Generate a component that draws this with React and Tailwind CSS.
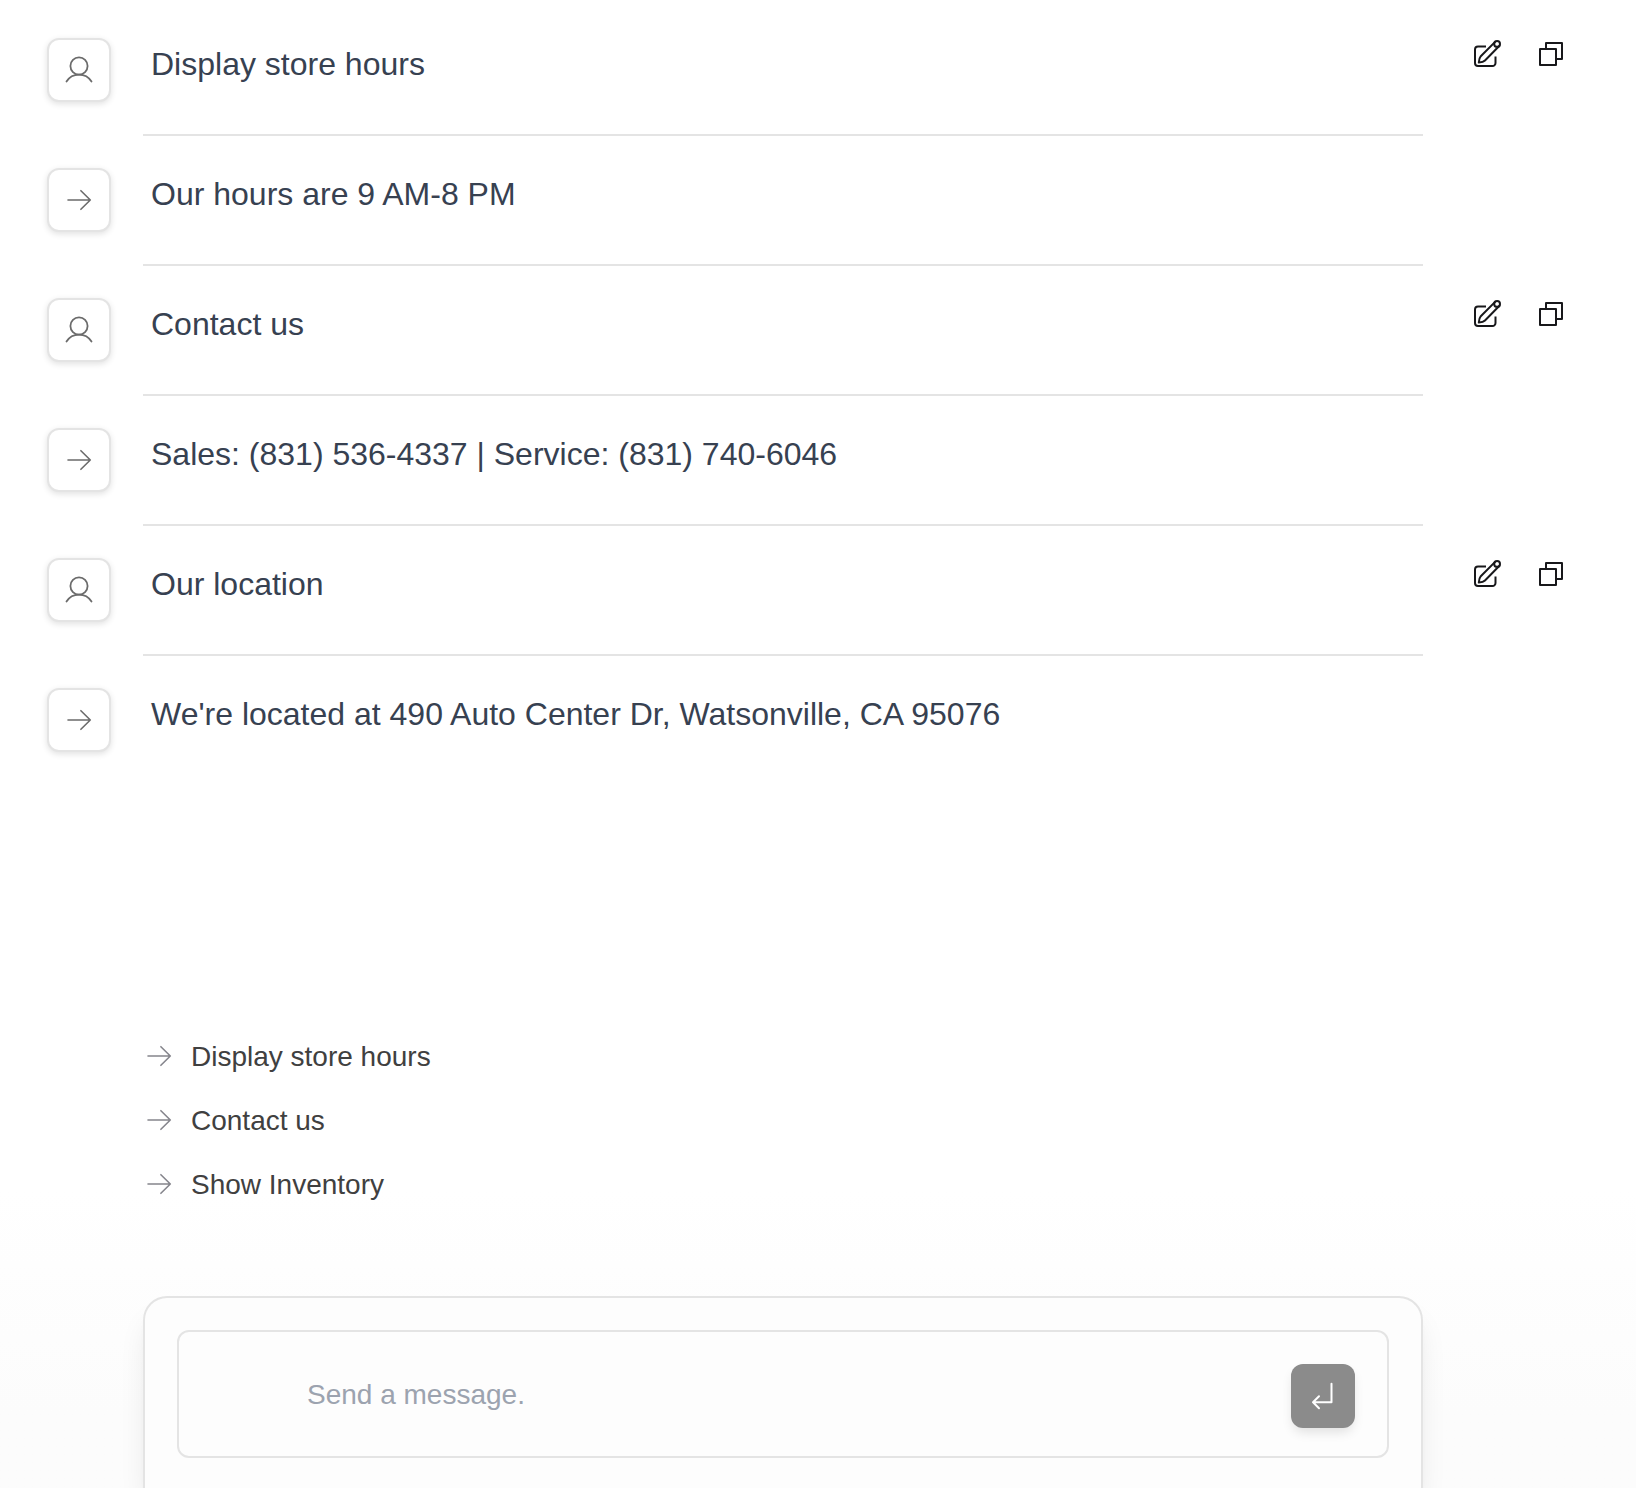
const messages = [
  { from: "user", text: "Display store hours" },
  { from: "bot", text: "Our hours are 9 AM-8 PM" },
  { from: "user", text: "Contact us" },
  { from: "bot", text: "Sales: (831) 536-4337 | Service: (831) 740-6046" },
  { from: "user", text: "Our location" },
  { from: "bot", text: "We're located at 490 Auto Center Dr, Watsonville, CA 95076" },
];

const suggestions = ["Display store hours", "Contact us", "Show Inventory"];

function Icon({ children }) {
  return (
    <svg
      viewBox="0 0 32 32"
      className="size-8 shrink-0"
      fill="none"
      stroke="currentColor"
      strokeWidth="2"
      strokeLinecap="round"
      strokeLinejoin="round"
      aria-hidden="true"
    >
      {children}
    </svg>
  );
}

const UserIcon = () => (
  <Icon>
    <g strokeWidth="1.8">
      <circle cx="16" cy="12" r="8.6" />
      <path d="M3.500 27.500C6.200 23.200 10.800 20.600 16 20.600s9.800 2.600 12.500 6.900" />
    </g>
  </Icon>
);

const ArrowIcon = () => (
  <Icon>
    <path d="M5 16h22.300M17.900 6.700L27.300 16l-9.400 9.300" strokeWidth="1.6" />
  </Icon>
);

const EditIcon = () => (
  <Icon>
    <path d="M15 8.500H7a3 3 0 0 0-3 3V25a3 3 0 0 0 3 3h14.500a3 3 0 0 0 3-3v-6.500" strokeLinecap="butt" />
    <path d="M24.100 3.900L9.800 18.200Q8.200 20 7.800 24.500Q12.300 24.200 14 22.500L28.200 8" />
    <circle cx="26.100" cy="5.900" r="2.900" />
  </Icon>
);

const CopyIcon = () => (
  <Icon>
    <path d="M5 11h16v16H5z" />
    <path d="M11 11V5h16v16h-6" />
  </Icon>
);

function Message({ from, text, last }) {
  return (
    <li className="flex items-start">
      <div className="mr-8 flex size-16 shrink-0 items-center justify-center rounded-xl border-2 border-[#e4e4e4] bg-white text-[#6b6b6b] shadow-[0_2px_6px_rgba(0,0,0,0.12)]">
        {from === "user" ? <UserIcon /> : <ArrowIcon />}
      </div>
      <div className={last ? "min-w-0 flex-1" : "min-w-0 flex-1 border-b-2 border-[#e4e4e4] pb-10"}>
        <p className="px-2 pb-1 text-[32px] leading-13 text-[#374151]">{text}</p>
      </div>
      <div className="ml-12 flex w-24 shrink-0 justify-between text-[#18181b]">
        {from === "user" && (
          <>
            <button type="button" aria-label="Edit message"><EditIcon /></button>
            <button type="button" aria-label="Copy message"><CopyIcon /></button>
          </>
        )}
      </div>
    </li>
  );
}

export default function App() {
  return (
    <div className="flex min-h-screen flex-col overflow-hidden bg-linear-to-b from-white from-80% to-[#fcfcfc] to-95% font-['Liberation_Sans',Arial,sans-serif]">
      <ul className="flex flex-col gap-8 pt-[38px] pr-[69px] pl-[47px]">
        {messages.map((m, i) => (
          <Message key={i} {...m} last={i === messages.length - 1} />
        ))}
      </ul>
      <div className="mt-auto mr-[213px] ml-[143px]">
        <ul className="mb-20">
          {suggestions.map((s) => (
            <li key={s}>
              <button type="button" className="flex h-16 items-center gap-4 text-[28px] text-[#404040]">
                <span className="text-[#85858c]"><ArrowIcon /></span>
                <span className="pt-0.5">{s}</span>
              </button>
            </li>
          ))}
        </ul>
        <div className="rounded-t-3xl border-2 border-b-0 border-[#e4e4e4] bg-[#fdfdfd] px-8 pt-8 pb-[30px] shadow-[0_20px_30px_-6px_rgba(0,0,0,0.1),0_8px_12px_-8px_rgba(0,0,0,0.1)]">
          <form className="flex items-start rounded-xl border-2 border-[#e4e4e4] pt-8 pr-8 pb-7 pl-32" onSubmit={(e) => e.preventDefault()}>
            <input
              type="text"
              aria-label="Message"
              placeholder="Send a message."
              className="h-[62px] min-w-0 flex-1 bg-transparent text-[28px] text-[#374151] outline-none placeholder:text-[#9ca3af]"
            />
            <button type="submit" aria-label="Send message" className="flex size-16 shrink-0 items-center justify-center rounded-xl bg-[#8b8b8b] text-white shadow-[0_6px_12px_-2px_rgba(0,0,0,0.12)]">
              <Icon>
                <path d="M24.500 3.700V22.300H6M12 16.300l-6 6 6 6" />
              </Icon>
            </button>
          </form>
        </div>
      </div>
    </div>
  );
}
